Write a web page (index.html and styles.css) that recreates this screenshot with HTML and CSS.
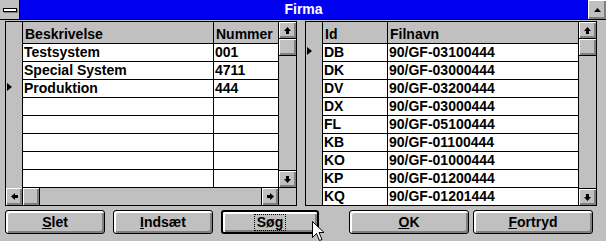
FILE: index.html
```html
<!DOCTYPE html>
<html lang="da">
<head>
    <meta charset="UTF-8">
    <title>Firma</title>
    <link rel="stylesheet" href="styles.css">
</head>
<body>

    <div class="window">
        <div class="titlebar">
            <div class="sysmenu"><span class="sysbar"></span></div>
            <div class="title">Firma</div>
            <div class="maxbtn">
                <svg width="7" height="4" viewBox="0 0 7 4"><polygon points="3.5,0 7,4 0,4" fill="#000"/></svg>
            </div>
        </div>

        <div class="content">
            <div class="grids">

                <!-- Firma list -->
                <div class="grid grid-left">
                    <div class="table">
                        <div class="ind">
                            <div class="ind-head"></div>
                            <div class="ind-cell"></div>
                            <div class="ind-cell"></div>
                            <div class="ind-cell current"></div>
                            <div class="ind-cell"></div>
                            <div class="ind-cell"></div>
                        </div>
                        <div class="cells">
                            <div class="row head"><div class="c wide">Beskrivelse</div><div class="c narrow">Nummer</div></div>
                            <div class="row"><div class="c wide">Testsystem</div><div class="c narrow">001</div></div>
                            <div class="row"><div class="c wide">Special System</div><div class="c narrow">4711</div></div>
                            <div class="row"><div class="c wide">Produktion</div><div class="c narrow">444</div></div>
                            <div class="row"><div class="c wide"></div><div class="c narrow"></div></div>
                            <div class="row"><div class="c wide"></div><div class="c narrow"></div></div>
                            <div class="row"><div class="c wide"></div><div class="c narrow"></div></div>
                            <div class="row"><div class="c wide"></div><div class="c narrow"></div></div>
                            <div class="row"><div class="c wide"></div><div class="c narrow"></div></div>
                        </div>
                    </div>
                    <div class="vscroll vscroll-left">
                        <div class="sb-btn sb-up"><svg width="7" height="7" viewBox="0 0 7 7"><polygon points="3.5,0 7,4 0,4" fill="#000"/><rect x="2" y="4" width="3" height="3" fill="#000"/></svg></div>
                        <div class="sb-btn sb-thumb"></div>
                        <div class="sb-track"></div>
                        <div class="sb-btn sb-down"><svg width="7" height="7" viewBox="0 0 7 7"><rect x="2" y="0" width="3" height="3" fill="#000"/><polygon points="0,3 7,3 3.5,7" fill="#000"/></svg></div>
                    </div>
                    <div class="hscroll">
                        <div class="sb-btn sb-left"><svg width="7" height="7" viewBox="0 0 7 7"><polygon points="0,3.5 4,0 4,7" fill="#000"/><rect x="4" y="2" width="3" height="3" fill="#000"/></svg></div>
                        <div class="sb-btn sb-hthumb"></div>
                        <div class="sb-track"></div>
                        <div class="sb-btn sb-right"><svg width="7" height="7" viewBox="0 0 7 7"><rect x="0" y="2" width="3" height="3" fill="#000"/><polygon points="3,0 7,3.5 3,7" fill="#000"/></svg></div>
                    </div>
                    <div class="corner"></div>
                </div>

                <!-- Filnavne -->
                <div class="grid grid-right">
                    <div class="table">
                        <div class="ind">
                            <div class="ind-head"></div>
                            <div class="ind-cell current"></div>
                        </div>
                        <div class="cells">
                            <div class="row head"><div class="c narrow">Id</div><div class="c wide">Filnavn</div></div>
                            <div class="row"><div class="c narrow">DB</div><div class="c wide">90/GF-03100444</div></div>
                            <div class="row"><div class="c narrow">DK</div><div class="c wide">90/GF-03000444</div></div>
                            <div class="row"><div class="c narrow">DV</div><div class="c wide">90/GF-03200444</div></div>
                            <div class="row"><div class="c narrow">DX</div><div class="c wide">90/GF-03000444</div></div>
                            <div class="row"><div class="c narrow">FL</div><div class="c wide">90/GF-05100444</div></div>
                            <div class="row"><div class="c narrow">KB</div><div class="c wide">90/GF-01100444</div></div>
                            <div class="row"><div class="c narrow">KO</div><div class="c wide">90/GF-01000444</div></div>
                            <div class="row"><div class="c narrow">KP</div><div class="c wide">90/GF-01200444</div></div>
                            <div class="row"><div class="c narrow">KQ</div><div class="c wide">90/GF-01201444</div></div>
                        </div>
                    </div>
                    <div class="vscroll">
                        <div class="sb-btn sb-up"><svg width="7" height="7" viewBox="0 0 7 7"><polygon points="3.5,0 7,4 0,4" fill="#000"/><rect x="2" y="4" width="3" height="3" fill="#000"/></svg></div>
                        <div class="sb-btn sb-thumb"></div>
                        <div class="sb-track"></div>
                        <div class="sb-btn sb-down"><svg width="7" height="7" viewBox="0 0 7 7"><rect x="2" y="0" width="3" height="3" fill="#000"/><polygon points="0,3 7,3 3.5,7" fill="#000"/></svg></div>
                    </div>
                </div>

            </div>

            <div class="buttons">
                <button class="btn btn-slet"><u>S</u>let</button>
                <button class="btn btn-indsaet"><u>I</u>ndsæt</button>
                <button class="btn btn-soeg btn-default"><span class="focus">Søg</span></button>
                <button class="btn btn-ok"><u>O</u>K</button>
                <button class="btn btn-fortryd"><u>F</u>ortryd</button>
            </div>
        </div>

        <!-- mouse pointer -->
        <svg class="cursor" width="13" height="21" viewBox="0 0 13 21">
            <path d="M0.5 0.5 L0.5 16.5 L4.5 12.5 L7.5 19.5 L10 18.5 L7 11.5 L12 11.5 Z" fill="#fff" stroke="#000" stroke-width="1"/>
        </svg>
    </div>

</body>
</html>
```

FILE: styles.css
```css
body {
    margin: 0;
    font-family: "Liberation Sans", Arial, sans-serif;
    font-weight: bold;
    font-size: 14px;
    color: #000;
}
.window {
    position: relative;
    width: 606px;
    height: 241px;
    overflow: hidden;
    background: #c0c0c0;
}

/* Title bar */
.titlebar {
    display: flex;
    height: 20px;
    box-sizing: border-box;
    border-bottom: 1px solid #000;
    background: #0000f0;
}
.sysmenu {
    width: 20px;
    box-sizing: border-box;
    border-right: 1px solid #000;
    background: #c0c0c0;
    display: flex;
    align-items: center;
    justify-content: center;
}
.sysbar {
    width: 14px;
    height: 4px;
    box-sizing: border-box;
    border: 1px solid #000;
    background: #fff;
    box-shadow: 1px 1px #808080;
}
.title {
    flex: 1;
    color: #fff;
    text-align: center;
    line-height: 19px;
}
.maxbtn {
    width: 19px;
    box-sizing: border-box;
    border-left: 1px solid #000;
    background: #c0c0c0;
    box-shadow: inset 1px 1px #fff, inset -2px -2px #808080;
    display: flex;
    align-items: center;
    justify-content: center;
}

.content {
    padding: 1px 0 0 5px;
}
.grids {
    display: flex;
    gap: 8px;
}

/* Grids */
.grid {
    width: 292px;
    height: 185px;
    box-sizing: border-box;
    border: 1px solid #000;
    display: grid;
    grid-template-columns: 273px 17px;
    background: #c0c0c0;
}
.grid-left {
    grid-template-rows: 166px 17px;
}
.grid-right {
    grid-template-rows: 183px;
}
.table {
    display: flex;
    overflow: hidden;
}
.ind {
    flex: none;
    width: 17px;
    box-sizing: border-box;
    border-right: 1px solid #000;
    background: #c0c0c0;
}
.ind-head {
    height: 22px;
}
.ind-cell {
    height: 18px;
    box-sizing: border-box;
    padding: 3px 0 0 1px;
}
.ind-cell.current::before {
    content: "";
    display: block;
    width: 0;
    height: 0;
    border-left: 5px solid #000;
    border-top: 4px solid transparent;
    border-bottom: 4px solid transparent;
}
.cells {
    flex: 1;
    background: #fff;
}
.row {
    display: flex;
    height: 18px;
    box-sizing: border-box;
    border-bottom: 1px solid #000;
}
.row.head {
    height: 22px;
    background: #c0c0c0;
}
.c {
    box-sizing: border-box;
    border-right: 1px solid #000;
    padding-left: 1px;
    line-height: 17px;
    white-space: nowrap;
    overflow: hidden;
}
.head .c {
    padding: 4px 0 0 2px;
}
.wide {
    width: 191px;
}
.narrow {
    width: 65px;
}

/* Scrollbars */
.vscroll {
    display: flex;
    flex-direction: column;
    background: #c0c0c0;
}
.vscroll-left {
    border-bottom: 1px solid #000;
}
.hscroll {
    display: flex;
    background: #c0c0c0;
    border-right: 1px solid #000;
}
.sb-btn {
    flex: none;
    height: 16px;
    background: #c0c0c0;
    box-shadow: inset 1px 1px #fff, inset -2px -2px #808080;
    display: flex;
    align-items: center;
    justify-content: center;
}
.sb-up, .sb-thumb {
    border-bottom: 1px solid #000;
}
.sb-down {
    border-top: 1px solid #000;
}
.sb-track {
    flex: 1;
}
.hscroll .sb-btn {
    width: 16px;
    height: 17px;
}
.sb-left, .sb-hthumb {
    border-right: 1px solid #000;
}
.sb-right {
    border-left: 1px solid #000;
}
.corner {
    background: #c0c0c0;
}

/* Buttons */
.buttons {
    display: flex;
    margin-top: 4px;
}
.btn {
    height: 24px;
    box-sizing: border-box;
    padding: 0;
    border: 1px solid #000;
    border-radius: 3px;
    background: #c0c0c0;
    box-shadow: inset 2px 2px #fff, inset -2px -2px #808080;
    font: inherit;
    color: #000;
    display: flex;
    align-items: center;
    justify-content: center;
}
.btn-slet {
    width: 100px;
}
.btn-indsaet {
    width: 100px;
    margin-left: 8px;
}
.btn-soeg {
    width: 98px;
    margin-left: 8px;
}
.btn-ok {
    width: 120px;
    margin-left: 30px;
}
.btn-fortryd {
    width: 120px;
    margin-left: 4px;
}
.btn-default {
    border-width: 2px;
}
.focus {
    outline: 1px dotted #000;
    padding: 0 2px;
    line-height: 15px;
}

.cursor {
    position: absolute;
    left: 312px;
    top: 221px;
}
```
